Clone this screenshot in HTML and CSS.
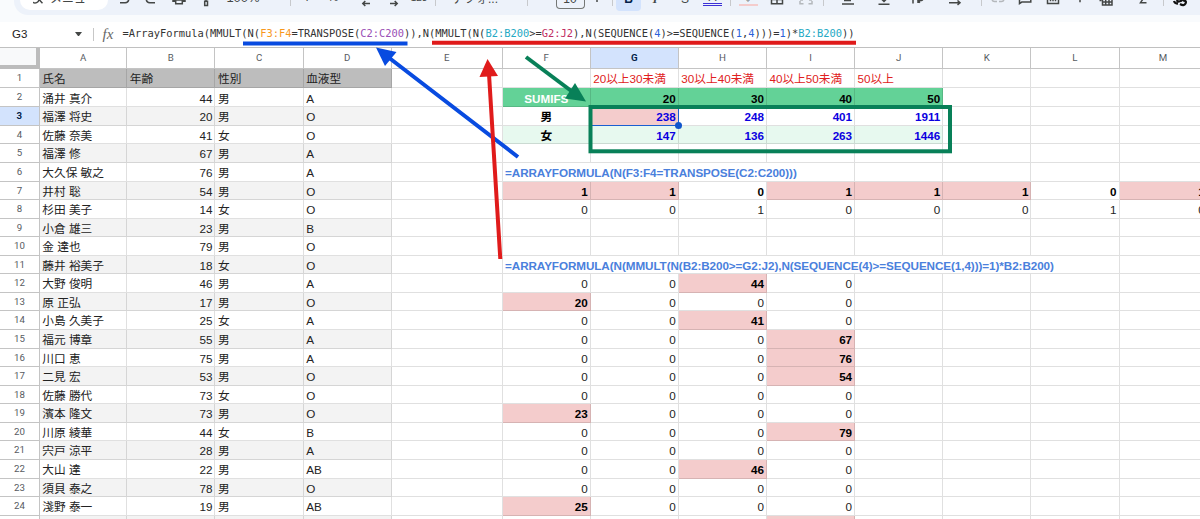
FILE: index.html
```
<!DOCTYPE html>
<html lang="ja">
  <head>
    <meta charset="UTF-8" />
    <title>SUMIFS</title>
    <link rel="stylesheet" href="styles.css">
  </head>

  <body>
    <div class="toolbar">
      <div class="tool">
        <div class="search">
          <svg width="10" height="8" viewBox="0 0 10 8"><path d="M0 -4.500a4 4 0 1 0 6 4L9.500 3.200" /></svg>
          <span class="text">メニュー</span>
        </div>
      </div>
      <div class="tool"><svg width="16" height="8" viewBox="0 0 16 8"><path d="M4 2.800h5.200q3.400-.4 3.600-3.800" /></svg></div>
      <div class="tool"><svg width="16" height="8" viewBox="0 0 16 8"><path d="M12 2.800H6.800Q3.400 2.400 3.200-1" /></svg></div>
      <div class="tool"><svg width="16" height="8" viewBox="0 0 16 8"><path d="M2 -2v3.200h2.500M14 -2v3.200h-2.500M2 0h12M4.700 -.5h6.600v4.300H4.700z" /></svg></div>
      <div class="tool"><svg width="16" height="8" viewBox="0 0 16 8"><path d="M8 -1v2M6.700 1.200h2.800v4.300H6.700z" /></svg></div>
      <div class="tool"><span class="text zoom">100%</span></div>
      <div class="tool sep"></div>
      <div class="tool"><span class="text up">¥</span></div>
      <div class="tool"><span class="text up">%</span></div>
      <div class="tool"><svg width="16" height="8" viewBox="0 0 16 8"><path d="M12 3.500H5M7.300 1L4.800 3.500 7.300 6" /></svg></div>
      <div class="tool"><svg width="16" height="8" viewBox="0 0 16 8"><path d="M4 3.500h7M8.700 1l2.500 2.500L8.700 6" /></svg></div>
      <div class="tool"><span class="text small">123</span></div>
      <div class="tool sep"></div>
      <div class="tool"><span class="text">デフォ...</span></div>
      <div class="tool sep"></div>
      <div class="tool"><div class="size"><span class="text">10</span></div></div>
      <div class="tool"><svg width="16" height="8" viewBox="0 0 16 8"><path d="M8 -3v5" /></svg></div>
      <div class="tool sep"></div>
      <div class="tool"><div class="active"><span class="text">B</span></div></div>
      <div class="tool"><span class="text italic">I</span></div>
      <div class="tool"><span class="text">S</span></div>
      <div class="tool"><div class="color"><span class="text up">A</span></div></div>
      <div class="tool sep"></div>
      <div class="tool"><div class="color fill"><span class="text up">◇</span></div></div>
      <div class="tool"><svg width="16" height="8" viewBox="0 0 16 8"><path d="M2.500 -4v7.800h11V-4M8 -4v7.800M2.500 -.5h11" /></svg></div>
      <div class="tool"><svg class="dim" width="16" height="8" viewBox="0 0 16 8"><path d="M2 1v2.800h3.500M14 1v2.800h-3.500M2 0h3M14 0h-3" /></svg></div>
      <div class="tool sep"></div>
      <div class="tool"><svg width="16" height="8" viewBox="0 0 16 8"><path d="M4 .5h7M2 4h12" /></svg></div>
      <div class="tool"><svg width="16" height="8" viewBox="0 0 16 8"><path d="M8 -2v3M5.500 -1L8 1.500 10.500 -1M2.500 4.200h11" /></svg></div>
      <div class="tool"><svg width="16" height="8" viewBox="0 0 16 8"><path d="M3 -2v5.500M8 3V.5h3.500q1.500-.5 1.500-2M10 -1.200L8 .6l2 2" /></svg></div>
      <div class="tool"><svg width="16" height="8" viewBox="0 0 16 8"><path d="M2 2.800h11M10.500 .5l2.500 2.300-2.500 2" /></svg></div>
      <div class="tool sep"></div>
      <div class="tool"><svg class="dim" width="16" height="8" viewBox="0 0 16 8"><path d="M7 1.500H4.500Q2.500 1.500 2-.5M9 1.500h2.500q2 0 2.500-2" /></svg></div>
      <div class="tool"><svg width="16" height="8" viewBox="0 0 16 8"><path d="M2.500 -4v7.500L4.800 2h9V-4" /></svg></div>
      <div class="tool"><svg width="16" height="8" viewBox="0 0 16 8"><path d="M2.500 -4v7.500h11V-4M5.500 -2v3.300M8 -2v3.300M10.500 -1v2.300" /></svg></div>
      <div class="tool"><svg width="16" height="8" viewBox="0 0 16 8"><path d="M8 -3v5.200" /></svg></div>
      <div class="tool"><svg width="16" height="8" viewBox="0 0 16 8"><path d="M1.500 .5h2M4.500 -1h9.500v6H4.500zM4.500 2H14M7.700 -1v6M11 -1v6" /></svg></div>
      <div class="tool"><svg width="16" height="8" viewBox="0 0 16 8"><path d="M9 -2.500L5.500 2.700H11.500" /></svg></div>
      <div class="tool sep"></div>
      <div class="tool"><svg class="currency" width="18" height="8" viewBox="0 0 18 8"><path d="M3 1q1 3 4 2.500M7 -1q-2 3 1 2.500t4-2.500M9 4q4 2.500 5.500-.5T12 .5" /></svg></div>
    </div>

    <div class="formula-bar">
      <span class="name-box">G3</span>
      <span class="caret"></span>
      <span class="fx">fx</span>
      <code class="formula">=ArrayFormula(MMULT(N(<span class="orange">F3:F4</span>=TRANSPOSE(<span class="purple">C2:C200</span>)),N(MMULT(N(<span class="cyan">B2:B200</span>&gt;=<span class="crimson">G2:J2</span>),N(SEQUENCE(<span class="num">4</span>)&gt;=SEQUENCE(<span class="num">1</span>,<span class="num">4</span>)))=<span class="num">1</span>)*<span class="cyan">B2:B200</span>))</code>
    </div>

    <table class="sheet" id="sheet"></table>

    <svg class="marks" width="1200" height="519" viewBox="0 0 1200 519">
      <g class="green">
        <rect x="590.500" y="107" width="359.500" height="44.300" />
        <path d="M526 57L572 91.500" />
        <polygon points="586,101.500 575,83 565,98.500" />
      </g>
      <g class="blue">
        <path d="M243 43.500H407.500M518 157L388 57" />
        <polygon points="376,47.500 396.500,52 385,66" />
      </g>
      <g class="red">
        <path d="M432 42.800H856M500.300 259L489 74" />
        <polygon points="487.500,59 479.500,77 498,76" />
      </g>
    </svg>

    <script>
      var people = [
        ['涌井 真介', 44, '男', 'A'],
        ['福澤 将史', 20, '男', 'O'],
        ['佐藤 奈美', 41, '女', 'O'],
        ['福澤 修', 67, '男', 'A'],
        ['大久保 敏之', 76, '男', 'A'],
        ['井村 聡', 54, '男', 'O'],
        ['杉田 美子', 14, '女', 'O'],
        ['小倉 雄三', 23, '男', 'B'],
        ['金 達也', 79, '男', 'O'],
        ['藤井 裕美子', 18, '女', 'O'],
        ['大野 俊明', 46, '男', 'A'],
        ['原 正弘', 17, '男', 'O'],
        ['小島 久美子', 25, '女', 'A'],
        ['福元 博章', 55, '男', 'A'],
        ['川口 恵', 75, '男', 'A'],
        ['二見 宏', 53, '男', 'O'],
        ['佐藤 勝代', 73, '女', 'O'],
        ['濱本 隆文', 73, '男', 'O'],
        ['川原 綾華', 44, '女', 'B'],
        ['宍戸 涼平', 28, '男', 'A'],
        ['大山 達', 22, '男', 'AB'],
        ['須貝 泰之', 78, '男', 'O'],
        ['淺野 泰一', 19, '男', 'AB']
      ];

      // cells from column F on, by row number
      var right = {
        1: ['', '20以上30未満', '30以上40未満', '40以上50未満', '50以上'],
        2: ['SUMIFS', 20, 30, 40, 50],
        3: ['男', 238, 248, 401, 1911],
        4: ['女', 147, 136, 263, 1446],
        6: ['=ARRAYFORMULA(N(F3:F4=TRANSPOSE(C2:C200)))'],
        7: [1, 1, 0, 1, 1, 1, 0, 1],
        8: [0, 0, 1, 0, 0, 0, 1, 0],
        11: ['=ARRAYFORMULA(N(MMULT(N(B2:B200>=G2:J2),N(SEQUENCE(4)>=SEQUENCE(1,4)))=1)*B2:B200)'],
        12: [0, 0, 44, 0],
        13: [20, 0, 0, 0],
        14: [0, 0, 41, 0],
        15: [0, 0, 0, 67],
        16: [0, 0, 0, 76],
        17: [0, 0, 0, 54],
        18: [0, 0, 0, 0],
        19: [23, 0, 0, 0],
        20: [0, 0, 0, 79],
        21: [0, 0, 0, 0],
        22: [0, 0, 46, 0],
        23: [0, 0, 0, 0],
        24: [25, 0, 0, 0]
      };

      var sheet = document.getElementById('sheet');

      function addCell(row, tag, value, classes) {
        var cell = document.createElement(tag);
        cell.textContent = value;
        cell.className = classes;
        row.appendChild(cell);
      }

      function addRow(name) {
        var row = document.createElement('tr');
        row.className = name;
        sheet.appendChild(row);
        return row;
      }

      var head = addRow('head');
      addCell(head, 'th', '', 'corner');
      'ABCDEFGHIJKLM'.split('').forEach(function (letter) {
        addCell(head, 'th', letter, letter == 'G' ? 'selected' : '');
      });

      for (var n = 1; n <= 25; n++) {
        var row = addRow('row row-' + n);
        addCell(row, 'th', n == 25 ? '' : n, n == 3 ? 'selected' : '');

        var person = n == 1 ? ['氏名', '年齢', '性別', '血液型'] : people[n - 2] || ['', '', '', ''];
        person.forEach(function (value) {
          var classes = n == 1 ? 'title' : n % 2 ? 'band' : '';
          if (typeof value == 'number') classes += ' number';
          addCell(row, 'td', value, classes);
        });
        addCell(row, 'td', '', '');

        var values = right[n] || [];
        if (n == 6 || n == 11) {
          addCell(row, 'td', values[0], n == 6 ? 'note span-4' : 'note span-7');
          for (var k = n == 6 ? 4 : 7; k < 8; k++) addCell(row, 'td', '', '');
          continue;
        }
        for (var c = 0; c < 8; c++) {
          var value = c < values.length ? values[c] : '';
          var classes = typeof value == 'number' ? 'number' : '';
          if (n == 1) classes = 'range';
          if (n == 2 && c < 5) classes += ' green-head';
          if ((n == 3 || n == 4) && c < 5) classes += c ? ' total' : ' sex';
          if (n == 4 && c < 5) classes += ' green-band';
          if (n == 3 && c == 1) classes += ' hit cursor';
          if (n == 7) classes += ' bold';
          if ((n == 7 || n > 11) && value > 0) classes += ' hit bold';
          if (n == 25 && c == 3) classes += ' hit';
          addCell(row, 'td', value, classes);
        }
      }
    </script>
  </body>
</html>
```

FILE: styles.css
```
* {
  box-sizing: border-box;
}

body {
  margin: 0;
  width: 1200px;
  height: 519px;
  overflow: hidden;
  position: relative;
  background: #f9fbfd;
  font-family: "Liberation Sans", "Noto Sans CJK JP", sans-serif;
  color: #222;
}

/* toolbar */
/* every track runs from the centre of one tool to the centre of the next */
.toolbar {
  display: grid;
  grid-template-columns: 60px 26.5px 28px 27.5px 37px 47px 17px 26px 33px 28px 25px 16px 40px 52px 43px 27px 15px 16.5px 26.5px 30px 27.5px 17.5px 18px 29px 29px 17px 25px 36px 34px 37px 26px 17px 27px 28px 27px 26px 37px 20px 17px 0;
  height: 14.5px;
  margin-left: 14px;
  padding-left: 50px;
  overflow: hidden;
  background: #edf2fa;
  border-radius: 0 0 0 14px;
}

.tool {
  display: flex;
  justify-content: center;
  align-items: flex-start;
  width: 0;
}

.tool svg {
  flex: none;
  fill: none;
  stroke: #444746;
  stroke-width: 1.5;
}

.tool svg.dim {
  stroke: #b4b8bc;
}

.tool svg.currency {
  stroke: #111;
  stroke-width: 2.2;
}

.text {
  margin-top: -9px;
  font-size: 12px;
  line-height: 16px;
  white-space: nowrap;
  color: #444746;
}

.zoom {
  font-size: 13px;
  margin-top: -10px;
}

.up {
  margin-top: -11px;
}

.small {
  font-size: 10px;
  margin-top: -10px;
}

.sep::before {
  content: "";
  flex: none;
  width: 1px;
  height: 6px;
  background: #c7c9cc;
}

.search {
  display: flex;
  flex: none;
  gap: 7px;
  width: 88px;
  height: 10px;
  padding-left: 13px;
  background: #fff;
  border-radius: 0 0 12px 12px;
}

.size {
  display: flex;
  flex: none;
  justify-content: center;
  width: 29px;
  height: 8.5px;
  border: 1px solid #747775;
  border-top: 0;
  border-radius: 0 0 4px 4px;
}

.active {
  display: flex;
  flex: none;
  justify-content: center;
  width: 25px;
  height: 11px;
  background: #d3e3fd;
  border-radius: 0 0 4px 4px;
}

.active .text {
  font-weight: bold;
  color: #041e49;
}

.italic {
  font-family: "Liberation Serif", serif;
  font-style: italic;
  font-weight: bold;
}

.color {
  display: flex;
  flex: none;
  justify-content: center;
  width: 19px;
  height: 6px;
  border-bottom: 3px double #3b30d6;
}

.color.fill {
  border-bottom: 2px solid #f4cccc;
}

/* formula bar */
.formula-bar {
  display: flex;
  align-items: center;
  height: 25.5px;
  margin-top: 7px;
  padding-left: 12px;
  background: #fff;
  font-size: 11.5px;
}

.name-box {
  width: 62.5px;
}

.caret {
  width: 7px;
  border: 3.5px solid transparent;
  border-top: 4px solid #444746;
  border-bottom: 0;
}

.fx {
  margin-left: 11px;
  padding-left: 9px;
  height: 13px;
  line-height: 13px;
  width: 29px;
  border-left: 1px solid #c7c7c7;
  font-family: "Liberation Serif", serif;
  font-style: italic;
  font-size: 15px;
  color: #666;
}

.formula {
  font-family: "DejaVu Sans Mono", monospace;
  font-size: 10.4px;
  line-height: 16px;
  margin-top: -2px;
  white-space: nowrap;
  margin-left: 1px;
  color: #333;
}

.orange {
  color: #f7981d;
}

.purple {
  color: #9a4fb5;
}

.cyan {
  color: #24a9c4;
}

.crimson {
  color: #c02b62;
}

.num {
  color: #2a62d9;
}

/* sheet */
.sheet {
  display: block;
  width: 1208px;
  background: #fff;
}

.sheet tr {
  display: grid;
  grid-template-columns: 39.8px 87.5px 88.2px 88.2px 88.2px 110.7px repeat(8, 88.15px);
  grid-template-rows: 100%;
  height: 18.57px;
}

.sheet .head {
  height: 21.8px;
  border-top: 1px solid #c0c0c0;
}

.sheet .row-1 {
  height: 18.8px;
}

.sheet .row-2 {
  height: 19.7px;
}

.sheet th {
  min-height: 0;
  padding: 0;
  border-right: 1px solid #c4c4c4;
  border-bottom: 1px solid #c4c4c4;
  font-family: Roboto, sans-serif;
  font-size: 9.7px;
  font-weight: normal;
  line-height: 17px;
  text-align: center;
  color: #575b5f;
}

.sheet .head th {
  line-height: 20px;
}

.sheet th.selected {
  background: #d3e3fd;
  color: #041e49;
  font-weight: bold;
}

.sheet .corner {
  background: #f8f9fa;
  border-right: 4px solid #bcbcbc;
  border-bottom: 4px solid #bcbcbc;
}

.sheet td {
  min-width: 0;
  min-height: 0;
  padding: 0 2px 0 2.5px;
  border-right: 1px solid rgba(0, 0, 0, 0.12);
  border-bottom: 1px solid rgba(0, 0, 0, 0.12);
  font-size: 11.68px;
  line-height: 20px;
  white-space: nowrap;
}

.sheet .row-2 td {
  line-height: 21.5px;
}

.sheet td.title {
  background: #bdbdbd;
}

.sheet td.band {
  background: #f3f3f3;
}

.sheet td.number {
  text-align: right;
}

.sheet td.range {
  color: #e02020;
}

.sheet td.green-head {
  background: #63d297;
  font-weight: bold;
  color: #000;
}

.sheet td.green-head:not(.number) {
  color: #fff;
  text-align: center;
}

.sheet td.green-band {
  background: #e7f9ef;
}

.sheet td.sex {
  font-weight: bold;
  text-align: center;
  color: #000;
}

.sheet td.total {
  font-weight: bold;
  color: #0b00e0;
}

.sheet td.hit {
  background: #f4cccc;
}

.sheet td.bold {
  font-weight: bold;
  color: #000;
}

.sheet td.note {
  font-weight: bold;
  color: #4a80dc;
  letter-spacing: -0.07px;
}

.sheet td.span-4 {
  grid-column: span 4;
}

.sheet td.span-7 {
  grid-column: span 7;
}

.sheet td.cursor {
  position: relative;
  border-right: 1px solid #1a5fd0;
  border-bottom: 1px solid #1a5fd0;
}

/* fill handle */
.sheet td.cursor::after {
  content: "";
  position: absolute;
  right: -4px;
  bottom: -4px;
  width: 7px;
  height: 7px;
  border-radius: 50%;
  background: #1155cc;
  z-index: 1;
}

/* arrows and frames over the sheet */
.marks {
  position: absolute;
  top: 0;
  left: 0;
  fill: none;
  stroke-width: 4;
}

.marks polygon {
  stroke: none;
}

.green {
  stroke: #088058;
}

.green polygon {
  fill: #088058;
}

.blue {
  stroke: #084be0;
}

.blue polygon {
  fill: #084be0;
}

.red {
  stroke: #e01b1b;
}

.red polygon {
  fill: #e01b1b;
}
```
